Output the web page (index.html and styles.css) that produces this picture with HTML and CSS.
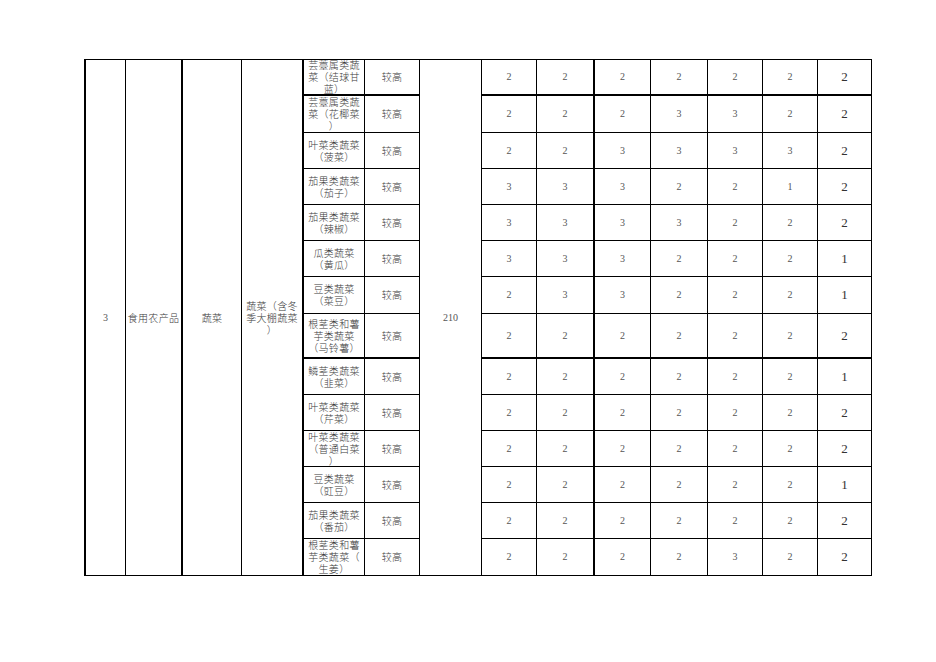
FILE: index.html
```html
<!DOCTYPE html>
<html lang="zh-CN">
<head>
<meta charset="utf-8">
<title>蔬菜</title>
<link rel="stylesheet" href="styles.css">
</head>
<body>
<div class="sheet">
<table class="grid">
<colgroup>
<col class="c1"><col class="c2"><col class="c3"><col class="c4"><col class="c5"><col class="c6"><col class="c7">
<col class="c8"><col class="c9"><col class="c10"><col class="c11"><col class="c12"><col class="c13"><col class="c14">
</colgroup>
<tbody>
<tr class="h36 thick">
<td rowspan="14" class="num">3</td>
<td rowspan="14" class="txt thickr">食用农产品</td>
<td rowspan="14" class="txt">蔬菜</td>
<td rowspan="14" class="txt thickr">蔬菜（含冬<br>季大棚蔬菜<br>）</td>
<td class="txt"><span class="ml">芸薹属类蔬<br>菜（结球甘<br>蓝）</span></td><td class="txt">较高</td>
<td rowspan="14" class="num">210</td>
<td class="num">2</td><td class="num thickr">2</td><td class="num">2</td><td class="num">2</td><td class="num">2</td><td class="num">2</td><td class="big">2</td>
</tr>
<tr class="h37">
<td class="txt"><span class="ml">芸薹属类蔬<br>菜（花椰菜<br>）</span></td><td class="txt">较高</td>
<td class="num">2</td><td class="num thickr">2</td><td class="num">2</td><td class="num">3</td><td class="num">3</td><td class="num">2</td><td class="big">2</td>
</tr>
<tr class="h36">
<td class="txt">叶菜类蔬菜<br>（菠菜）</td><td class="txt">较高</td>
<td class="num">2</td><td class="num thickr">2</td><td class="num">3</td><td class="num">3</td><td class="num">3</td><td class="num">3</td><td class="big">2</td>
</tr>
<tr class="h36">
<td class="txt">茄果类蔬菜<br>（茄子）</td><td class="txt">较高</td>
<td class="num">3</td><td class="num thickr">3</td><td class="num">3</td><td class="num">2</td><td class="num">2</td><td class="num">1</td><td class="big">2</td>
</tr>
<tr class="h36">
<td class="txt">茄果类蔬菜<br>（辣椒）</td><td class="txt">较高</td>
<td class="num">3</td><td class="num thickr">3</td><td class="num">3</td><td class="num">3</td><td class="num">2</td><td class="num">2</td><td class="big">2</td>
</tr>
<tr class="h36">
<td class="txt">瓜类蔬菜<br>（黄瓜）</td><td class="txt">较高</td>
<td class="num">3</td><td class="num thickr">3</td><td class="num">3</td><td class="num">2</td><td class="num">2</td><td class="num">2</td><td class="big">1</td>
</tr>
<tr class="h37">
<td class="txt">豆类蔬菜<br>（菜豆）</td><td class="txt">较高</td>
<td class="num">2</td><td class="num thickr">3</td><td class="num">3</td><td class="num">2</td><td class="num">2</td><td class="num">2</td><td class="big">1</td>
</tr>
<tr class="h45 thick">
<td class="txt">根茎类和薯<br>芋类蔬菜<br>（马铃薯）</td><td class="txt">较高</td>
<td class="num">2</td><td class="num thickr">2</td><td class="num">2</td><td class="num">2</td><td class="num">2</td><td class="num">2</td><td class="big">2</td>
</tr>
<tr class="h36">
<td class="txt">鳞茎类蔬菜<br>（韭菜）</td><td class="txt">较高</td>
<td class="num">2</td><td class="num thickr">2</td><td class="num">2</td><td class="num">2</td><td class="num">2</td><td class="num">2</td><td class="big">1</td>
</tr>
<tr class="h36">
<td class="txt">叶菜类蔬菜<br>（芹菜）</td><td class="txt">较高</td>
<td class="num">2</td><td class="num thickr">2</td><td class="num">2</td><td class="num">2</td><td class="num">2</td><td class="num">2</td><td class="big">2</td>
</tr>
<tr class="h36">
<td class="txt"><span class="ml">叶菜类蔬菜<br>（普通白菜<br>）</span></td><td class="txt">较高</td>
<td class="num">2</td><td class="num thickr">2</td><td class="num">2</td><td class="num">2</td><td class="num">2</td><td class="num">2</td><td class="big">2</td>
</tr>
<tr class="h36">
<td class="txt">豆类蔬菜<br>（豇豆）</td><td class="txt">较高</td>
<td class="num">2</td><td class="num thickr">2</td><td class="num">2</td><td class="num">2</td><td class="num">2</td><td class="num">2</td><td class="big">1</td>
</tr>
<tr class="h36">
<td class="txt">茄果类蔬菜<br>（番茄）</td><td class="txt">较高</td>
<td class="num">2</td><td class="num thickr">2</td><td class="num">2</td><td class="num">2</td><td class="num">2</td><td class="num">2</td><td class="big">2</td>
</tr>
<tr class="h37">
<td class="txt"><span class="ml">根茎类和薯<br>芋类蔬菜（<br>生姜）</span></td><td class="txt">较高</td>
<td class="num">2</td><td class="num thickr">2</td><td class="num">2</td><td class="num">2</td><td class="num">3</td><td class="num">2</td><td class="big">2</td>
</tr>
</tbody>
</table>
</div>
</body>
</html>
```

FILE: styles.css
```css
html, body {
  margin: 0;
  padding: 0;
  background: #ffffff;
}

.sheet {
  padding: 59px 0 0 84px;
}

.grid {
  table-layout: fixed;
  border-collapse: separate;
  border-spacing: 0;
  width: 788px;
  border-left: 2px solid #000;
  border-top: 1px solid #000;
}

.c1 { width: 40px; }
.c2 { width: 57px; }
.c3 { width: 59px; }
.c4 { width: 62px; }
.c5 { width: 61px; }
.c6 { width: 55px; }
.c7 { width: 62px; }
.c8 { width: 55px; }
.c9 { width: 58px; }
.c10 { width: 56px; }
.c11 { width: 57px; }
.c12 { width: 55px; }
.c13 { width: 55px; }
.c14 { width: 54px; }

.grid td {
  box-sizing: border-box;
  padding: 0;
  border-right: 1px solid #000;
  border-bottom: 1px solid #000;
  text-align: center;
  vertical-align: middle;
  white-space: nowrap;
}

.grid td.thickr {
  border-right-width: 2px;
}

.h36 { height: 36px; }
.h37 { height: 37px; }
.h45 { height: 45px; }

.thick td:not([rowspan]) {
  border-bottom-width: 2px;
}

.txt {
  font-family: "Noto Sans CJK SC", "Noto Sans CJK JP", sans-serif;
  font-size: 10px;
  line-height: 12px;
  color: #3a3a3a;
  font-weight: 300;
  letter-spacing: 0.3px;
}

.ml {
  display: block;
  margin: -4px 0;
}

.num {
  font-family: "Liberation Serif", "Noto Sans CJK SC", serif;
  font-size: 10px;
  line-height: 12px;
  color: #555;
}

.big {
  font-family: "Liberation Serif", serif;
  font-size: 13px;
  line-height: 14px;
  color: #333;
}
```
